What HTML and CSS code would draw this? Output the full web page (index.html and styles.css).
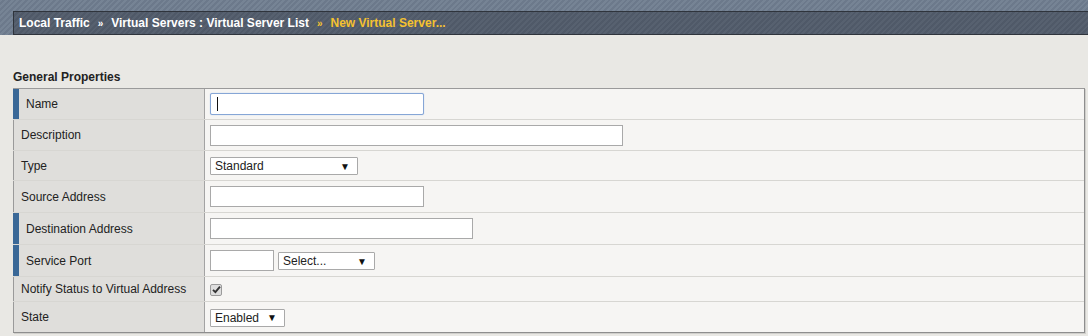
FILE: index.html
```html
<!DOCTYPE html>
<html>
<head>
<meta charset="utf-8">
<link rel="stylesheet" href="styles.css">
</head>
<body>
<div class="topstrip">
  <div class="crumbs">
    <span>Local Traffic</span><span class="sep">&raquo;</span><span>Virtual Servers : Virtual Server List</span><span class="sep cur">&raquo;</span><span class="cur">New Virtual Server...</span>
  </div>
</div>
<div class="main">
  <div class="heading">General Properties</div>
  <div class="props">
    <div class="row h32">
      <div class="lbl req">Name</div>
      <div class="val"><span class="field"><input class="inp w214 focus" type="text"><span class="caret"></span></span></div>
    </div>
    <div class="row h31">
      <div class="lbl">Description</div>
      <div class="val"><input class="inp w413" type="text"></div>
    </div>
    <div class="row h30">
      <div class="lbl">Type</div>
      <div class="val"><div class="sel w148"><span>Standard</span><span class="arr">&#9660;</span></div></div>
    </div>
    <div class="row h32">
      <div class="lbl">Source Address</div>
      <div class="val"><input class="inp w214" type="text"></div>
    </div>
    <div class="row h32">
      <div class="lbl req">Destination Address</div>
      <div class="val"><input class="inp w263" type="text"></div>
    </div>
    <div class="row h32">
      <div class="lbl req">Service Port</div>
      <div class="val gap4"><input class="inp w64" type="text"><div class="sel w97"><span>Select...</span><span class="arr">&#9660;</span></div></div>
    </div>
    <div class="row h25">
      <div class="lbl">Notify Status to Virtual Address</div>
      <div class="val"><span class="chk"><svg width="9" height="9" viewBox="0 0 9 9"><path d="M1 4.8 L3.4 7.2 L8 1.6" fill="none" stroke="#333" stroke-width="1.9"/></svg></span></div>
    </div>
    <div class="row h30 last">
      <div class="lbl">State</div>
      <div class="val"><div class="sel w75"><span>Enabled</span><span class="arr">&#9660;</span></div></div>
    </div>
  </div>
</div>
</body>
</html>
```
FILE: styles.css
```css
* { box-sizing: border-box; }
html, body { margin: 0; padding: 0; }
body {
  background: #e9e8e4;
  font-family: "Liberation Sans", Arial, sans-serif;
  font-size: 12px;
  color: #222;
  width: 1088px;
  height: 336px;
  overflow: hidden;
}
.topstrip {
  height: 35px;
  padding-top: 11px;
  padding-left: 13px;
  background-color: #6f7d8f;
  background-image: repeating-linear-gradient(135deg, rgba(255,255,255,0.05) 0 2px, rgba(0,0,0,0.03) 2px 4px);
}
.crumbs {
  height: 24px;
  border: 1px solid #2f343c;
  border-right: none;
  background-color: #525c6b;
  background-image: repeating-linear-gradient(135deg, rgba(255,255,255,0.03) 0 2px, rgba(0,0,0,0.03) 2px 4px);
  color: #fff;
  font-weight: bold;
  font-size: 12px;
  line-height: 22px;
  padding-left: 5px;
}
.sep {
  font-size: 10px;
  margin: 0 8px 0 8px;
}
.cur { color: #f5c230; }
.main {
  padding: 0 3px 0 13px;
}
.heading {
  font-weight: bold;
  font-size: 12px;
  line-height: 14px;
  margin-top: 35px;
  margin-bottom: 4px;
  color: #222;
}
.props {
  border-top: 1px solid #9a9a9a;
  border-right: 1px solid #8e8e8e;
  border-bottom: 1px solid #8e8e8e;
  box-shadow: 1px 1px 0 #d0cfcb;
}
.row {
  display: grid;
  grid-template-columns: 192px 1fr;
  border-bottom: 1px solid #d7d6d2;
}
.row.last { border-bottom: none; }
.h32 { height: 32px; }
.h31 { height: 31px; }
.h30 { height: 30px; }
.h25 { height: 25px; }
.row:first-child.h32 { height: 31px; }
.lbl {
  background: #dfdedb;
  border-left: 1px solid #9a9a9a;
  border-right: 1px solid #a3a3a3;
  padding-left: 7px;
  display: flex;
  align-items: center;
  color: #222;
}
.lbl.req {
  border-left: 6px solid #3a6897;
}
.val {
  background: #f6f5f3;
  padding-left: 5px;
  display: flex;
  align-items: center;
}
.gap4 { gap: 4px; }
.field { position: relative; display: inline-flex; }
.inp {
  height: 21px;
  border: 1px solid #a9a9a9;
  background: #fff;
  padding: 0 4px;
  margin: 0;
  font-family: "Liberation Sans", Arial, sans-serif;
  font-size: 12px;
  outline: none;
}
.inp.focus {
  height: 22px;
  border-color: #86a6d6;
  box-shadow: 0 0 1px #9cb8e4;
  border-radius: 2px;
}
.caret {
  position: absolute;
  left: 7px;
  top: 4px;
  width: 1px;
  height: 14px;
  background: #111;
}
.w214 { width: 214px; }
.w413 { width: 413px; }
.w263 { width: 263px; }
.w64 { width: 64px; }
.sel {
  height: 18px;
  border: 1px solid #a9a9a9;
  background: #fff;
  display: flex;
  align-items: center;
  justify-content: space-between;
  padding: 0 7px 0 4px;
  font-size: 12px;
  color: #222;
  border-radius: 1px;
  margin-top: 1px;
}
.arr {
  font-size: 10px;
  color: #111;
}
.w148 { width: 148px; }
.w97 { width: 97px; }
.w75 { width: 75px; }
.chk {
  width: 12px;
  height: 12px;
  border: 1px solid #9b9b9b;
  background: #dedede;
  border-radius: 2px;
  display: inline-flex;
  align-items: center;
  justify-content: center;
  margin-top: 1px;
}
```
